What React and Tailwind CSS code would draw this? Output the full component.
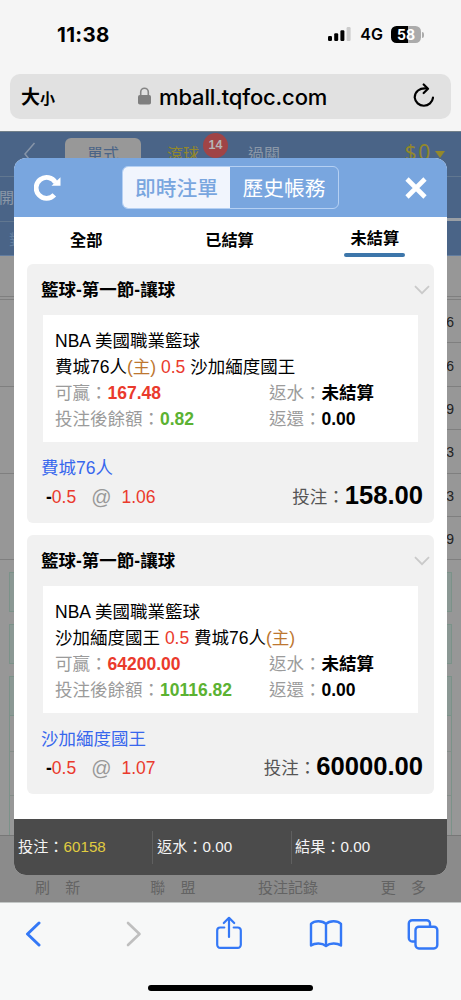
import clsx from 'clsx';

const BETS = [
  {
    id: 1,
    title: '籃球-第一節-讓球',
    league: 'NBA 美國職業籃球',
    home: '費城76人',
    away: '沙加緬度國王',
    homeFirst: true,
    line: '0.5',
    win: '167.48',
    balance: '0.82',
    pick: '費城76人',
    odds: '1.06',
    stake: '158.00',
  },
  {
    id: 2,
    title: '籃球-第一節-讓球',
    league: 'NBA 美國職業籃球',
    home: '費城76人',
    away: '沙加緬度國王',
    homeFirst: false,
    line: '0.5',
    win: '64200.00',
    balance: '10116.82',
    pick: '沙加緬度國王',
    odds: '1.07',
    stake: '60000.00',
  },
];

// Odds column that stays visible to the right of the dialog
const ROWS = ['6', '6', '9', '3', '3', '9'];

function StatusBar() {
  return (
    <div className="flex h-[74px] items-start pt-[22px] pl-[57px] pr-[37px] font-['Inter',sans-serif] text-black">
      <span className="text-[20.5px] leading-[25px] font-bold tracking-[0.3px]">11:38</span>
      <svg className="mt-[5px] ml-auto" width="23" height="15" viewBox="0 0 23 15">
        <rect x="0" y="9" width="4" height="5" rx="1.2" />
        <rect x="6.2" y="6.2" width="4" height="7.8" rx="1.2" />
        <rect x="12.4" y="3.2" width="4" height="10.8" rx="1.2" />
        <rect x="18.6" y="0" width="4" height="14" rx="1.2" fill="#cbcbcb" />
      </svg>
      <span className="ml-[9px] text-[16px] leading-[25px] font-semibold">4G</span>
      <div className="mt-[4px] ml-[8px] flex items-center">
        <div className="flex h-[17px] w-[30px] items-center justify-center rounded-[5.5px] bg-[linear-gradient(to_right,#000_57%,#ababab_57%)] text-[14px] leading-none font-bold text-white">
          58
        </div>
        <div className="ml-px h-[6px] w-[2px] rounded-r-full bg-[#ababab]" />
      </div>
    </div>
  );
}

function AddressBar() {
  return (
    <div className="mx-[10px] flex h-[45px] items-center rounded-[10px] bg-[#e1e1e1] pr-[17px] pl-[11px] text-black">
      <div className="flex w-[117px] items-baseline font-['Noto_Sans_CJK_TC',sans-serif] leading-[26px] font-bold">
        <span className="text-[19px]">大</span>
        <span className="text-[15px]">小</span>
      </div>
      <svg className="-mt-px" width="13" height="18" viewBox="0 0 13 18">
        <path d="M2.7 9V5a3.8 3.8 0 0 1 7.6 0v4" fill="none" stroke="#858585" strokeWidth="1.6" />
        <rect width="13" height="9.5" y="8" rx="1.8" fill="#7f7f7f" />
      </svg>
      <span className="ml-[8px] font-['Inter',sans-serif] text-[22px] leading-[28px] font-medium tracking-[-0.15px]">
        mball.tqfoc.com
      </span>
      <svg className="-mt-[2px] ml-auto" width="23" height="26" viewBox="0 0 23 26" fill="none" stroke="#000" strokeWidth="2.2" strokeLinecap="round" strokeLinejoin="round">
        <path d="M16 5.500C8.500 4.300 3.700 9 3.700 14.500A9.200 9.200 0 0 0 22 14.500" />
        <path d="M12.700 1.500l4.300 4.200-4.300 4.300" />
      </svg>
    </div>
  );
}

function BackgroundPage() {
  return (
    <div className="flex h-full flex-col bg-[#979797] font-['Liberation_Sans','Noto_Sans_CJK_TC',sans-serif]">
      <div className="flex h-[45px] shrink-0 border-t border-[#72808a] bg-[#4a6487]">
        <svg className="mt-[10px] ml-[22px]" width="16" height="26" viewBox="0 0 16 26" fill="none" stroke="#8795a8" strokeWidth="1.5">
          <path d="M12.500 1L3 12l9.500 12" />
        </svg>
        <div className="mt-[6px] ml-[27px] h-[40px] w-[76px] rounded-[6px] bg-[#989898] pt-[5px] text-center text-[16px] text-[#4a6487]">
          單式
        </div>
        <div className="relative mt-[11px] ml-[26px] text-[16px] text-[#93882b]">
          滾球
          <span className="absolute -top-[10px] left-[36px] flex size-[25px] items-center justify-center rounded-full bg-[#a04446] text-[12.5px] font-bold text-[#b5b5b5]">
            14
          </span>
        </div>
        <div className="mt-[11px] ml-[49px] text-[16px] text-[#8b98a8]">過關</div>
        <div className="mt-[6px] ml-auto flex text-[#93882b]">
          <span className="font-['Noto_Sans',sans-serif] text-[21px] leading-[28px] tracking-[1.8px]">$0</span>
          <svg className="mt-[13px] mr-[16px] ml-[3px]" width="10" height="7" viewBox="0 0 10 7">
            <path d="M0 0h10L5 7z" fill="#93882b" />
          </svg>
        </div>
      </div>
      <div className="h-[45px] shrink-0 border-t border-[#617790] bg-[#4a6487] pt-[10px] text-[15px] text-[#8b98a8]">
        <span className="-ml-px">開</span>
      </div>
      <div className="flex h-[34px] shrink-0 justify-between bg-[#4a6487]">
        <div className="w-[100px] border-t border-[#617790] pt-[7px] pl-[9px] text-[15px] text-[#64809f]">對</div>
        <div className="-mt-[3px] h-[3px] w-[60px] bg-[#9a9fa5]" />
      </div>
      <div className="h-[45px] shrink-0 border-t border-t-[#627da0]">
        <div className="mt-[40px] h-[4px] border-y border-[#7f7f7f]" />
      </div>
      {ROWS.map((value, i) => (
        <div key={i} className="flex h-[43.4px] shrink-0 justify-end text-[14px] text-[#222]">
          <div className={clsx('flex-1 border-b', i % 2 ? 'border-[#7f7f7f]' : 'border-transparent')} />
          <div className="flex w-[230px] items-center justify-end border-b border-[#7f7f7f] pt-[3px] pr-[7px]">{value}</div>
        </div>
      ))}
      <div className="flex flex-1 flex-col gap-[12px] px-[9px] pt-[12px]">
        <div className="h-[40px] border border-[#7b9289] bg-[#8b9894]" />
        <div className="h-[40px] border border-[#7b9289] bg-[#8b9894]" />
        <div className="flex-1 border border-b-0 border-[#7b9289]">
          <div className="h-[39px] border-b border-[#7b9289] bg-[#8b9894]" />
          <div className="h-[36px] border-b border-[#858d89]" />
          <div className="h-[44px] border-b border-[#858d89]" />
        </div>
      </div>
      <div className="flex h-[67px] shrink-0 items-end border-t border-[#777] bg-[#8b8b8b] pb-[4px] text-center text-[15px] leading-[20px] text-[#636363]">
        <span className="flex-1">刷<span className="inline-block w-[15px]" />新</span>
        <span className="flex-1">聯<span className="inline-block w-[15px]" />盟</span>
        <span className="flex-1">投注記錄</span>
        <span className="flex-1">更<span className="inline-block w-[15px]" />多</span>
      </div>
    </div>
  );
}

function BetCard({ bet }) {
  const home = (
    <>
      {bet.home}
      <span className="text-[#bd7730]">(主)</span>
    </>
  );
  return (
    <div className="h-[259px] rounded-[6px] bg-[#f1f1f1] text-[17.5px] leading-[26px] text-black">
      <div className="flex h-[51px] items-center justify-between pr-[4px] pl-[14px] font-bold">
        {bet.title}
        <svg width="16" height="10" viewBox="0 0 16 10" fill="none" stroke="#cacaca" strokeWidth="1.8">
          <path d="M1 1.2l7 7 7-7" />
        </svg>
      </div>
      <div className="mr-[16px] ml-[16px] h-[127px] bg-white pt-[13px] pl-[12px]">
        <div>{bet.league}</div>
        <div>
          {bet.homeFirst ? home : bet.away} <span className="text-[#ea3a2c]">{bet.line}</span>{' '}
          {bet.homeFirst ? bet.away : home}
        </div>
        <div className="grid grid-cols-[214px_1fr] text-[#9b9b9b]">
          <div>可贏：<b className="text-[#ea3a2c]">{bet.win}</b></div>
          <div>返水：<b className="text-black">未結算</b></div>
          <div>投注後餘額：<b className="text-[#5bb232]">{bet.balance}</b></div>
          <div>返還：<b className="text-black">0.00</b></div>
        </div>
      </div>
      <div className="pt-[13px] pl-[14px] text-[#3767ed]">{bet.pick}</div>
      <div className="mt-px flex h-[30px] items-center pr-[11px] pl-[19px] text-[#ea3a2c]">
        <b className="text-black">-</b>
        {bet.line}
        <span className="ml-[15px] text-[20px] text-[#999]">@</span>
        <span className="ml-[10px]">{bet.odds}</span>
        <span className="ml-auto text-[#555]">投注：</span>
        <b className="-mt-[4px] text-[25.6px] text-black">{bet.stake}</b>
      </div>
    </div>
  );
}

function BetDialog() {
  return (
    <div className="absolute top-[27px] left-[14px] flex h-[717px] w-[433px] flex-col overflow-hidden rounded-[12px] bg-white font-['Liberation_Sans','Noto_Sans_CJK_TC',sans-serif]">
      <div className="flex h-[59px] shrink-0 items-center bg-[#79a6df] pr-[20px] pl-[20px]">
        <svg width="27" height="27" viewBox="0 0 27 27">
          <path d="M21.500 8.600A10.400 10.400 0 1 0 20.300 20.800" fill="none" stroke="#fff" strokeWidth="4.8" />
          <path d="M26.500 3.200v8.600H17.500z" fill="#fff" />
        </svg>
        <div className="ml-[61px] flex h-[43px] w-[217px] overflow-hidden rounded-[6px] border border-[#b5d0f3] pb-0 text-[20.7px]">
          <div className="flex w-[107px] items-center justify-center bg-[#f1f5fd] pt-[2px] font-medium text-[#79a6df]">即時注單</div>
          <div className="flex flex-1 items-center justify-center pt-[2px] text-white">歷史帳務</div>
        </div>
        <svg className="ml-auto" width="22" height="22" viewBox="0 0 22 22" stroke="#fff" strokeWidth="4.6">
          <path d="M2 2l18 18M20 2L2 20" />
        </svg>
      </div>
      <div className="grid h-[47px] shrink-0 grid-cols-3 text-center text-[16.2px] leading-[24px] font-bold text-black">
        <div className="pt-[11px]">全部</div>
        <div className="pt-[11px] pr-[2px]">已結算</div>
        <div className="mx-auto w-[61px] pt-[9px]">
          未結算
          <div className="mt-[3px] h-[4px] w-full rounded-full bg-[#3d76aa]" />
        </div>
      </div>
      <div className="flex flex-1 flex-col gap-[12px] px-[13px]">
        {BETS.map((bet) => <BetCard key={bet.id} bet={bet} />)}
      </div>
      <div className="grid h-[56px] shrink-0 grid-cols-[138px_139px_1fr] items-center bg-[#4b4b4b] text-[15.2px] text-[#f4f4f4]">
        <div className="pl-[4px]">投注：<span className="text-[#e0cc40]">60158</span></div>
        <div className="flex h-[33px] items-center border-l border-[#606060] pl-[4px]">返水：0.00</div>
        <div className="flex h-[33px] items-center border-l border-[#606060] pl-[3px]">結果：0.00</div>
      </div>
    </div>
  );
}

function SafariToolbar() {
  return (
    <div className="flex h-[98px] flex-col justify-between border-t border-[#c3c7c6] bg-[#f7f8f8] pb-[9px]">
      <div className="flex h-[62px] items-center pl-[24px] text-[#3478f6]">
        <svg width="18" height="26" viewBox="0 0 18 26" fill="none" stroke="currentColor" strokeWidth="3" strokeLinecap="round" strokeLinejoin="round">
          <path d="M15 2L3.500 13 15 24" />
        </svg>
        <svg className="ml-[82px]" width="18" height="26" viewBox="0 0 18 26" fill="none" stroke="#bfbfbf" strokeWidth="2.6" strokeLinecap="round" strokeLinejoin="round">
          <path d="M4 2L15.500 13 4 24" />
        </svg>
        <svg className="-mt-[3px] ml-[73px]" width="28" height="34" viewBox="0 0 28 34" fill="none" stroke="currentColor" strokeWidth="2.2" strokeLinecap="round" strokeLinejoin="round">
          <path d="M9.300 11.500H5.200A3 3 0 0 0 2.200 14.500V28.800A3 3 0 0 0 5.200 31.800H22.800A3 3 0 0 0 25.800 28.800V14.500A3 3 0 0 0 22.800 11.500H18.700" />
          <path d="M14 21V2M8.800 7L14 1.800 19.200 7" />
        </svg>
        <svg className="-mt-px ml-[66px]" width="34" height="30" viewBox="0 0 34 30" fill="none" stroke="currentColor" strokeWidth="2.4" strokeLinejoin="round">
          <path d="M17 5C13.500 1.300 5.500 1.300 2 4.800V26.500c4-2.800 11-2.800 15 .5 4-3.300 11-3.300 15-.5V4.800C28.500 1.300 20.500 1.300 17 5zM17 5v22" />
        </svg>
        <svg className="ml-[64px]" width="32" height="31" viewBox="0 0 32 31" fill="none" stroke="currentColor" strokeWidth="2.4">
          <path d="M8.500 22.500H5.200a3.400 3.400 0 0 1-3.400-3.400V4.600a3.400 3.400 0 0 1 3.400-3.400h14.400A3.400 3.400 0 0 1 23 4.600v2.900" />
          <rect x="8.500" y="7.700" width="21.800" height="21.800" rx="3.400" />
        </svg>
      </div>
      <div className="mx-auto h-[6px] w-[165px] rounded-full bg-black" />
    </div>
  );
}

export default function App() {
  return (
    <div className="flex h-[1000px] w-[461px] flex-col overflow-hidden bg-[#f5f5f5]">
      <StatusBar />
      <AddressBar />
      <div className="relative mt-[12px] h-[771px] shrink-0">
        <BackgroundPage />
        <BetDialog />
      </div>
      <SafariToolbar />
    </div>
  );
}
